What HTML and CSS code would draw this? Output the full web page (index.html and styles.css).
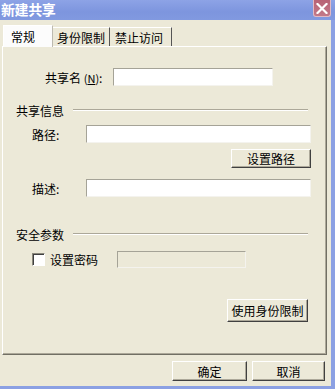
FILE: index.html
```html
<!DOCTYPE html>
<html>
<head>
<meta charset="utf-8">
<link rel="stylesheet" href="styles.css">
</head>
<body>
<div class="window">
  <div class="titlebar">
    <span class="title">新建共享</span>
    <span class="close"><svg width="12" height="11" viewBox="0 0 12 11"><path d="M1.5 1 L10.5 10 M10.5 1 L1.5 10" stroke="#fff" stroke-width="2.2" stroke-linecap="square"/></svg></span>
  </div>
  <div class="frame">
    <div class="tabs">
      <div class="tab active">常规</div>
      <div class="tab">身份限制</div>
      <div class="tab">禁止访问</div>
    </div>
    <div class="panel">
      <div class="row row-name">
        <span class="lbl lbl-name">共享名 <span class="acc">(<u>N</u>)</span>:</span>
        <span class="input w-name"></span>
      </div>
      <div class="group g1"><span class="gtext">共享信息</span><span class="gline"></span></div>
      <div class="row row-path">
        <span class="lbl lbl-path">路径:</span>
        <span class="input w-wide"></span>
      </div>
      <div class="btnrow r-setpath"><span class="btn b-setpath">设置路径</span></div>
      <div class="row row-desc">
        <span class="lbl lbl-path">描述:</span>
        <span class="input w-wide"></span>
      </div>
      <div class="group g2"><span class="gtext">安全参数</span><span class="gline"></span></div>
      <div class="row row-pwd">
        <span class="check"></span>
        <span class="lbl lbl-pwd">设置密码</span>
        <span class="input disabled w-pwd"></span>
      </div>
      <div class="btnrow r-limit"><span class="btn b-limit">使用身份限制</span></div>
    </div>
    <div class="footer">
      <span class="btn b-ok">确定</span>
      <span class="btn b-cancel">取消</span>
    </div>
  </div>
</div>
</body>
</html>
```
FILE: styles.css
```css
html, body {
  margin: 0;
  padding: 0;
  background: #ece9d8;
}
body {
  width: 335px;
  height: 389px;
  overflow: hidden;
  font-family: "Noto Sans CJK SC", "DejaVu Sans", sans-serif;
  font-size: 12px;
  color: #000;
}
.window {
  width: 335px;
  height: 389px;
  display: flex;
  flex-direction: column;
}
.titlebar {
  height: 20px;
  flex: none;
  display: flex;
  align-items: flex-start;
  justify-content: space-between;
  background: linear-gradient(to bottom, #8da3e6 0%, #7d95de 60%, #8199e0 100%);
}
.title {
  color: #fff;
  font-weight: bold;
  font-size: 14px;
  line-height: 18px;
  margin-left: 1px;
  letter-spacing: -0.4px;
}
.close {
  width: 18px;
  height: 17px;
  margin-right: 4px;
  box-sizing: border-box;
  border: 1px solid #e2b9c3;
  border-top: none;
  border-radius: 0 0 3px 3px;
  background: linear-gradient(to bottom, #b86376, #c27888);
  display: flex;
  align-items: center;
  justify-content: center;
}
.frame {
  flex: 1;
  display: flex;
  flex-direction: column;
  border-right: 4px solid #8ba0e3;
  border-bottom: 3px solid #8ba0e3;
  background: #ece9d8;
}
.tabs {
  display: flex;
  align-items: flex-end;
  height: 26px;
  padding-left: 3px;
  box-sizing: border-box;
}
.tab {
  height: 19px;
  line-height: 19px;
  box-sizing: border-box;
  padding: 0 6px 0 4px;
  border-right: 1px solid #555;
  border-top: 1px solid #fff;
  white-space: nowrap;
}
.tab.active {
  height: 22px;
  line-height: 22px;
  width: 50px;
  padding-left: 7px;
  background: #fcfcfc;
  border-left: 1px solid #fff;
  border-right: 1px solid #bdbab0;
  margin-bottom: -1px;
  position: relative;
  z-index: 1;
}
.tab:nth-child(2) { width: 57px; }
.tab:nth-child(3) { width: 62px; padding-left: 5px; }
.panel {
  margin-left: 2px;
  width: 325px;
  height: 309px;
  box-sizing: border-box;
  border-top: 1px solid #fff;
  border-left: 1px solid #fff;
  border-right: 1px solid #716f64;
  border-bottom: 1px solid #716f64;
  box-shadow: inset -1px -1px 0 #aca899;
  display: flex;
  flex-direction: column;
  padding-right: 15px;
}
.row {
  display: flex;
  align-items: center;
  height: 18px;
}
.lbl { white-space: nowrap; }
.acc { font-size: 11px; }
.row-name { margin-top: 21px; }
.lbl-name { margin-left: 42px; width: 68px; }
.w-name { width: 160px; }
.input {
  height: 18px;
  box-sizing: border-box;
  background: #fff;
  border-top: 1px solid #a5a397;
  border-left: 1px solid #a5a397;
  border-bottom: 1px solid #f4f3ee;
  border-right: 1px solid #f4f3ee;
}
.input.disabled { background: #ece9d8; height: 17px; }
.group {
  display: flex;
  align-items: center;
  height: 14px;
  margin-left: 13px;
  margin-right: 3px;
}
.gline {
  flex: 1;
  height: 0;
  border-top: 1px solid #aca899;
  border-bottom: 1px solid #fff;
  margin-left: 9px;
}
.g1 { margin-top: 17px; }
.row-path { margin-top: 8px; }
.lbl-path { margin-left: 29px; width: 54px; }
.w-wide { flex: 1; }
.btnrow { display: flex; justify-content: flex-end; }
.r-setpath { margin-top: 6px; }
.btn {
  box-sizing: border-box;
  display: flex;
  align-items: center;
  justify-content: center;
  background: #ece9d8;
  border-top: 1px solid #fff;
  border-left: 1px solid #fff;
  border-right: 1px solid #404040;
  border-bottom: 1px solid #404040;
  box-shadow: inset -1px -1px 0 #aca899;
  white-space: nowrap;
}
.b-setpath { width: 80px; height: 19px; }
.row-desc { margin-top: 11px; }
.g2 { margin-top: 30px; }
.row-pwd { margin-top: 10px; height: 17px; }
.check {
  width: 13px;
  height: 13px;
  box-sizing: border-box;
  margin-left: 29px;
  background: #fff;
  border-top: 1px solid #8a887c;
  border-left: 1px solid #8a887c;
  border-right: 1px solid #fff;
  border-bottom: 1px solid #fff;
  box-shadow: inset 1px 1px 0 #404040;
}
.lbl-pwd { margin-left: 5px; width: 67px; }
.w-pwd { width: 129px; }
.r-limit { margin-top: 31px; padding-right: 3px; }
.b-limit { width: 81px; height: 23px; }
.footer {
  display: flex;
  justify-content: flex-end;
  gap: 5px;
  margin-top: 6px;
  padding-right: 6px;
}
.b-ok { width: 75px; height: 20px; }
.b-cancel { width: 73px; height: 20px; }
```
